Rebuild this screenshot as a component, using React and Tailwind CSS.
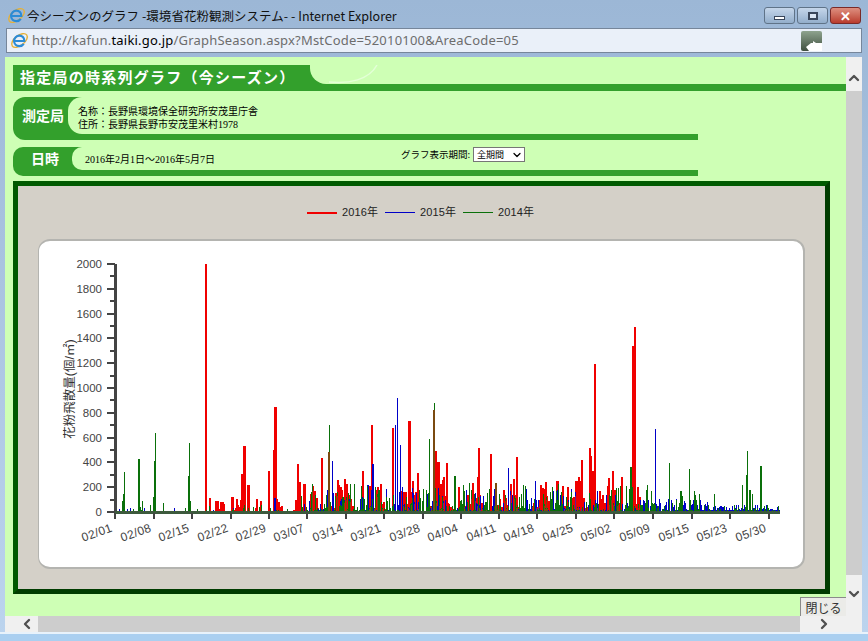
import { ChevronUp, ChevronDown, ChevronLeft, ChevronRight } from "lucide-react";

const jp = "font-['Noto_Sans_CJK_JP',sans-serif]";
const serifJp = "font-['Liberation_Serif','Noto_Sans_CJK_JP',serif]";

const AXIS = "#444444";
const BASE_Y = 512;
const PX_PER_UNIT = 0.124;

const xTicks = [
  [115, "02/01"], [154, "02/08"], [192, "02/15"], [231, "02/22"], [269, "02/29"], [307, "03/07"],
  [346, "03/14"], [384, "03/21"], [423, "03/28"], [461, "04/04"], [499, "04/11"], [537, "04/18"],
  [576, "04/25"], [614, "05/02"], [653, "05/09"], [692, "05/15"], [730, "05/23"], [769, "05/30"],
];

// peaks read off the reference: [x, value, width]
const redPeaks = [
  [205, 2000, 2], [209, 110, 2], [243, 530, 3], [241, 310, 2], [247, 220, 3], [231, 120, 3], [268, 330, 2], [274, 850, 3], [273, 500, 2],
  [297, 390, 2], [299, 240, 2], [303, 225, 3], [321, 435, 2], [337, 260, 2], [346, 225, 2], [362, 330, 2], [371, 700, 2],
  [392, 680, 2], [408, 735, 3], [417, 315, 2], [435, 490, 2], [437, 400, 3], [446, 395, 2], [458, 200, 2], [478, 515, 2],
  [490, 470, 2], [513, 270, 2], [516, 440, 2], [556, 250, 3], [567, 200, 2], [578, 265, 2], [581, 420, 2], [589, 520, 2],
  [590, 450, 2], [594, 1195, 2], [592, 330, 3], [599, 170, 2], [612, 330, 2], [621, 280, 2], [632, 1340, 3], [634, 1495, 2],
  [637, 200, 2], [562, 210, 2], [567, 190, 2],
];
const bluePeaks = [
  [274, 110, 2], [332, 415, 1], [372, 390, 2], [395, 700, 1], [397, 920, 1], [400, 540, 1], [367, 220, 2], [508, 355, 1],
  [535, 250, 1], [655, 670, 1], [402, 200, 1], [429, 150, 1], [438, 190, 1],
];
const greenPeaks = [
  [124, 320, 1], [123, 145, 1], [122, 90, 1], [138, 430, 2], [142, 85, 1], [155, 640, 1], [154, 410, 1],
  [153, 120, 1], [150, 60, 1], [163, 70, 1], [189, 555, 1], [188, 290, 1], [190, 90, 1], [329, 700, 1], [429, 590, 1],
  [434, 880, 1], [454, 290, 2], [469, 235, 1], [630, 360, 2], [647, 220, 1], [669, 395, 1], [689, 345, 1], [680, 170, 2],
  [714, 145, 1], [747, 490, 1], [746, 300, 2], [760, 370, 2], [742, 220, 1], [752, 145, 1], [749, 180, 2], [342, 120, 2], [378, 180, 1],
];
const brownPeaks = [[328, 480, 2], [433, 820, 2], [495, 235, 2]];

function rng(seed) {
  let s = seed;
  return () => {
    s = (s * 1664525 + 1013904223) % 4294967296;
    return s / 4294967296;
  };
}

const rand = rng(20160201);

function bar(x, value, w = 1) {
  const top = BASE_Y - value * PX_PER_UNIT;
  return `M${x} ${BASE_Y}h${w}V${top}h${-w}z`;
}

function noise() {
  const red = [];
  const blue = [];
  const green = [];
  const brown = [];
  const purple = [];
  for (let x = 116; x < 780; x++) {
    let r = 0;
    if (x < 205) r = rand() ** 3 * 10;
    else if (x < 310) r = Math.sin(x / 3.1) > 0 ? rand() ** 1.6 * 110 : rand() * 12;
    else if (x < 640) {
      const swell = 0.45 + 0.55 * Math.sin(x / 5.3);
      r = (rand() ** 1.7 * (x > 575 ? 380 : 300) + 6) * swell;
    }

    let b = 0;
    if (x < 300) b = rand() < 0.08 ? rand() * 35 : 0;
    else if (x < 640) b = rand() ** 5 * 200;
    else if (x < 710) b = rand() ** 2 * 100 + 10;
    else b = rand() ** 2 * 45 + 16;

    let g = 0;
    if (x < 300) g = rand() < 0.18 ? rand() ** 2 * 60 : 6;
    else if (x < 640) g = rand() ** 4 * 220 + 10;
    else if (x < 700) g = rand() ** 3 * 170 + 8;
    else g = rand() ** 6 * 55 + 6;

    if (r > 1) red.push(bar(x, r, 2));
    if (b > 1) blue.push(bar(x, b));
    if (g > 1) green.push(bar(x, g));
    if (r > 20 && g > 20 && rand() < 0.6) brown.push(bar(x, Math.min(r, g) * 0.8));
    if (r > 20 && b > 20 && rand() < 0.5) purple.push(bar(x, Math.min(r, b) * 0.8));
  }
  return { red, blue, green, brown, purple };
}

const n = noise();
const peaks = (list) => list.map(([x, v, w]) => bar(x, v, w));

const seriesPaths = {
  red: [...n.red, ...peaks(redPeaks)].join(""),
  blue: [...n.blue, ...peaks(bluePeaks)].join(""),
  green: [...n.green, ...peaks(greenPeaks)].join(""),
  brown: [...n.brown, ...peaks(brownPeaks)].join(""),
  purple: n.purple.join(""),
};

function Chart() {
  const yMajor = [];
  for (let v = 0; v <= 2000; v += 200) yMajor.push(v);
  const yMinor = yMajor.slice(0, -1).map((v) => v + 100);
  return (
    <svg viewBox="39 241 765 326" className="block w-[765px] h-[326px]">
      <g shapeRendering="crispEdges">
        <path d={seriesPaths.red} fill="#f00000" />
        <path d={seriesPaths.blue} fill="#0000c8" />
        <path d={seriesPaths.purple} fill="#6a1a90" />
        <path d={seriesPaths.green} fill="#0a700a" />
        <path d={seriesPaths.brown} fill="#7a4a10" />
        <rect x="114" y="264" width="3" height="250" fill={AXIS} />
        <rect x="114" y="511" width="666" height="3" fill="#3d5a3d" />
        {yMajor.map((v) => (
          <rect key={v} x="107" y={BASE_Y - v * PX_PER_UNIT - 1} width="8" height="2" fill={AXIS} />
        ))}
        {yMinor.map((v) => (
          <rect key={v} x="110" y={BASE_Y - v * PX_PER_UNIT - 1} width="5" height="2" fill={AXIS} />
        ))}
        {xTicks.map(([x]) => (
          <rect key={x} x={x - 1} y="513" width="2" height="6" fill={AXIS} />
        ))}
      </g>
      {yMajor.map((v) => (
        <text
          key={v}
          x="102"
          y={BASE_Y - v * PX_PER_UNIT + 4}
          textAnchor="end"
          fontSize="11.5"
          fill="#444"
          fontFamily="Liberation Sans, sans-serif"
        >
          {v}
        </text>
      ))}
      {xTicks.map(([x, label]) => (
        <text
          key={label}
          transform={`translate(${x - 2} 531) rotate(-20)`}
          textAnchor="end"
          fontSize="12"
          fill="#444"
          letterSpacing="0.3"
          fontFamily="Liberation Sans, sans-serif"
        >
          {label}
        </text>
      ))}
      <text
        transform="translate(74 389) rotate(-90)"
        textAnchor="middle"
        fontSize="12.5"
        fill="#333"
        fontFamily="Liberation Sans, Noto Sans CJK JP, sans-serif"
      >
        花粉飛散量(個/㎡)
      </text>
    </svg>
  );
}

function IeIcon() {
  return (
    <svg viewBox="0 0 20 20" className="w-[19px] h-[19px] shrink-0">
      <ellipse cx="10" cy="10" rx="9.6" ry="5.2" transform="rotate(-38 10 10)" fill="none" stroke="#e5b13a" strokeWidth="1.5" />
      <path
        d="M4.5 10.5h10.6c0-3.4-2.3-5.6-5.2-5.6-3 0-5.6 2.4-5.6 5.6s2.5 5.4 5.6 5.4c2.1 0 3.6-.9 4.6-2.4"
        fill="none"
        stroke="#2b8bd6"
        strokeWidth="2.3"
      />
    </svg>
  );
}

function WindowButton({ className, children }) {
  return (
    <div className={`h-[17px] w-[31px] rounded-[3px] border border-[#5f7388] flex items-center justify-center ${className}`}>
      {children}
    </div>
  );
}

function LegendItem({ color, thick, label }) {
  return (
    <div className="flex items-center gap-[5px]">
      <div className={`w-[30px] ${thick ? "h-[2px]" : "h-px"} ${color}`} />
      <span className="w-[36px] text-[11px] tracking-[0.15px] text-[#222] whitespace-nowrap font-['Liberation_Sans','Noto_Sans_CJK_JP',sans-serif]">
        {label}
      </span>
    </div>
  );
}

function SectionRow({ title, rowClass, labelClass, bodyClass, children }) {
  return (
    <div className={`flex w-[685px] bg-[#33a02c] ${rowClass}`}>
      <div className={`flex items-center font-bold text-white ${jp} ${labelClass}`}>{title}</div>
      <div className={`flex-1 bg-[#ceffb5] ${bodyClass}`}>{children}</div>
    </div>
  );
}

export default function App() {
  return (
    <div className={`w-[868px] h-[641px] flex flex-col overflow-hidden bg-gradient-to-b from-[#9cb7d6] to-[#bcd4ee] ${jp}`}>
      {/* Title bar */}
      <div className="h-[28px] flex items-start pl-[7px] pr-[7px] pt-[6px]">
        <IeIcon />
        <span className="ml-[1px] mt-[1px] text-[12.5px] leading-[17px] tracking-[0.03px] text-[#111] whitespace-nowrap">
          今シーズンのグラフ -環境省花粉観測システム- - Internet Explorer
        </span>
        <div className="ml-auto mt-[1px] flex gap-[2px]">
          <WindowButton className="bg-gradient-to-b from-[#c5d6ea] to-[#93aecb]">
            <div className="w-[11px] h-[4px] mt-[5px] border border-[#39465a] bg-white" />
          </WindowButton>
          <WindowButton className="bg-gradient-to-b from-[#c5d6ea] to-[#93aecb]">
            <div className="w-[10px] h-[8px] border-2 border-[#39465a] bg-[#dbe6f3]" />
          </WindowButton>
          <WindowButton className="border-[#7a2a28] bg-gradient-to-b from-[#dd8f80] to-[#b93a2c] text-white text-[13px] font-bold leading-none">
            ✕
          </WindowButton>
        </div>
      </div>

      {/* Address bar */}
      <div className="mx-[6px] h-[25px] flex items-center border border-[#76869a] bg-[#eaf0f9] pl-[3px] pr-[39px]">
        <IeIcon />
        <span className="ml-[3px] text-[13px] text-[#6d6d6d] whitespace-nowrap font-['Noto_Sans',sans-serif] tracking-[0.2px]">
          http://kafun.<span className="text-black">taiki.go.jp</span>/GraphSeason.aspx?MstCode=52010100&AreaCode=05
        </span>
        <svg viewBox="0 0 21 20" className="ml-auto w-[21px] h-[20px]">
          <defs>
            <linearGradient id="tool" x1="0" y1="0" x2="0" y2="1">
              <stop offset="0" stopColor="#8ea38e" />
              <stop offset="1" stopColor="#3f4f3f" />
            </linearGradient>
          </defs>
          <rect width="21" height="20" rx="2" fill="url(#tool)" />
          <path d="M5 16l5-4h2v-2l3 2h6v8H8z" fill="#fff" />
        </svg>
      </div>

      <div className="h-[4px]" />

      {/* Page + scrollbars */}
      <div className="h-[575px] ml-[5px] mr-[6px] flex">
        <div className="flex-1 flex flex-col relative">
          <div className="h-[559px] bg-[#ceffb5] pl-[8px] pt-[8px] overflow-hidden">
            {/* Heading band */}
            <div className="relative flex h-[26px] bg-[#33a02c]">
              <div className={`w-[297px] pl-[7px] pt-[1px] text-[15px] leading-[22px] font-bold text-white tracking-[1.25px] whitespace-nowrap ${jp}`}>
                指定局の時系列グラフ（今シーズン）
              </div>
              <div className="flex-1 h-[19px] bg-[#ceffb5] rounded-bl-[16px]" />
              <svg viewBox="0 0 60 19" className="absolute left-[310px] top-0 w-[60px] h-[19px]">
                <path d="M6 17c20 2 40-2 48-17" fill="none" stroke="#e4ffd8" strokeWidth="1.5" />
              </svg>
            </div>

            {/* Station */}
            <div className="mt-[6px]">
              <SectionRow
                title="測定局"
                rowClass="h-[43px] rounded-l-[12px]"
                labelClass="w-[55px] h-[37px] pl-[9px] text-[14px]"
                bodyClass="h-[37px] rounded-l-[14px] pl-[10px] pt-[8px]"
              >
                <div className={`text-[10px] leading-[13px] text-black whitespace-nowrap ${serifJp}`}>
                  <div>名称：長野県環境保全研究所安茂里庁舎</div>
                  <div>住所：長野県長野市安茂里米村1978</div>
                </div>
              </SectionRow>
            </div>

            {/* Date */}
            <div className="mt-[7px]">
              <SectionRow
                title="日時"
                rowClass="h-[29px] rounded-l-[10px]"
                labelClass="w-[59px] h-[23px] pl-[18px] text-[14px]"
                bodyClass="h-[23px] rounded-l-[10px] pl-[13px] flex items-start"
              >
                <span className={`w-[316px] mt-[6px] text-[10px] leading-[14px] text-black whitespace-nowrap ${serifJp}`}>
                  2016年2月1日～2016年5月7日
                </span>
                <span className={`w-[72px] text-[9.5px] leading-[14px] text-black whitespace-nowrap ${jp}`}>グラフ表示期間:</span>
                <div className={`w-[52px] h-[15px] flex items-center justify-between pl-[3px] pr-[1px] border border-[#767676] bg-white text-[9px] text-black ${jp}`}>
                  全期間
                  <ChevronDown size={12} strokeWidth={2.5} />
                </div>
              </SectionRow>
            </div>

            {/* Chart frame */}
            <div className="mt-[5px] w-[817px] h-[413px] border-[5px] border-t-[#005a00] border-l-[#005a00] border-r-[#003c00] border-b-[#003c00] bg-[#d4d0c8]">
              <div className="h-[53px] pl-[289px] flex items-center gap-[7px]">
                <LegendItem color="bg-[#f00000]" thick label="2016年" />
                <LegendItem color="bg-[#0000c8]" label="2015年" />
                <LegendItem color="bg-[#0a700a]" label="2014年" />
              </div>
              <div className="ml-[20px] w-[767px] h-[330px] border-t-2 border-r-2 border-b-2 border-l border-[#b4b4b0] rounded-[12px] bg-white overflow-hidden">
                <Chart />
              </div>
            </div>
          </div>

          {/* Horizontal scrollbar */}
          <div className="h-[16px] flex bg-[#f0f0f0]">
            <div className="w-[33px] flex items-center justify-end pr-[3px] text-[#505050]">
              <ChevronLeft size={16} strokeWidth={3.5} />
            </div>
            <div className="w-[762px] bg-[#cdcdcd]" />
            <div className="flex-1" />
          </div>

          <div className={`absolute right-0 top-[540px] w-[46px] h-[19px] bg-[#ebebe8] border-t border-l border-[#8a8a8a] text-[12px] leading-[19px] text-center text-[#333] ${jp}`}>
            閉じる
          </div>
          <div className="absolute left-[788px] top-[559px] w-[62px] h-[16px] flex items-center justify-center text-[#505050]">
            <ChevronRight size={16} strokeWidth={3.5} />
          </div>
        </div>

        {/* Vertical scrollbar */}
        <div className="w-[16px] flex flex-col items-center bg-[#f0f0f0] text-[#505050]">
          <div className="h-[34px] flex items-end pb-[5px]">
            <ChevronUp size={16} strokeWidth={3.5} />
          </div>
          <div className="w-full h-[484px] bg-[#cdcdcd]" />
          <div className="mt-[11px]">
            <ChevronDown size={16} strokeWidth={3.5} />
          </div>
        </div>
      </div>

      <div className="h-[2px] bg-[#e8f2fb]" />
      <div className="flex-1 bg-[#aacff0]" />
    </div>
  );
}
